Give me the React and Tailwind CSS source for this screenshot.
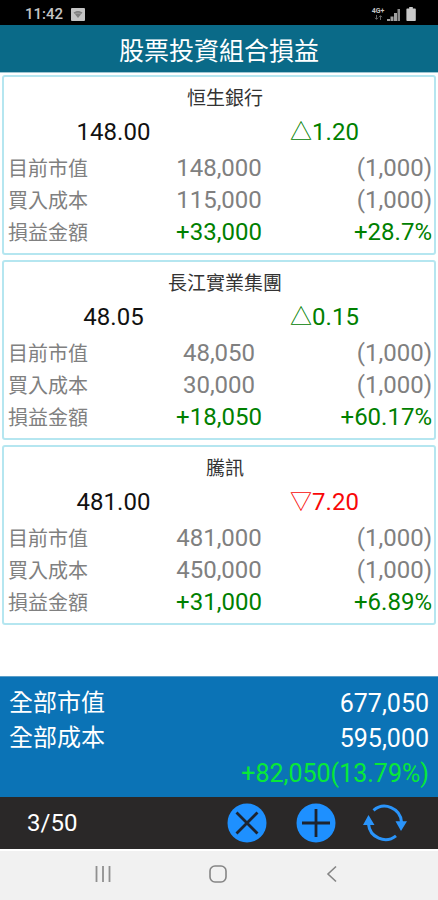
const holdings = [
  {
    name: "恒生銀行",
    price: "148.00",
    up: true,
    change: "1.20",
    value: "148,000",
    cost: "115,000",
    shares: "(1,000)",
    profit: "+33,000",
    rate: "+28.7%",
  },
  {
    name: "長江實業集團",
    price: "48.05",
    up: true,
    change: "0.15",
    value: "48,050",
    cost: "30,000",
    shares: "(1,000)",
    profit: "+18,050",
    rate: "+60.17%",
  },
  {
    name: "騰訊",
    price: "481.00",
    up: false,
    change: "7.20",
    value: "481,000",
    cost: "450,000",
    shares: "(1,000)",
    profit: "+31,000",
    rate: "+6.89%",
  },
];

function StatusBar() {
  return (
    <div className="flex h-[25px] items-center bg-black pt-[3px] pr-[22px] pl-[25px] text-[#c4c4c4]">
      <span className="text-[15px] leading-5 font-medium">11:42</span>
      <svg className="ml-2 h-[13px] w-[14px]" viewBox="0 0 14 13" aria-hidden="true">
        <rect width="14" height="13" rx="1" fill="#c4c4c4" />
        <path d="M2.5 4.6C5 2.4 9 2.4 11.5 4.6L7 10z" fill="#808080" />
        <path d="M4 6.2C5.8 4.8 8.2 4.8 10 6.2" fill="none" stroke="#a8a8a8" strokeWidth="0.8" />
      </svg>
      <div className="ml-auto flex items-center">
        <div className="flex w-[14px] flex-col items-center">
          <span className="text-[7px] leading-[7px] font-bold">4G+</span>
          <svg className="h-[5px] w-[9px]" viewBox="0 0 9 5" aria-hidden="true">
            <path d="M2.5 0v4M1 2.8l1.5 1.6L4 2.8M6.5 5V1M5 2.2L6.5.6 8 2.2" fill="none" stroke="#666" strokeWidth="1" />
          </svg>
        </div>
        <svg className="ml-[2px] h-[13px] w-[14px]" viewBox="0 0 14 13" aria-hidden="true">
          <path d="M0 11h3v2H0zM3.500 8.500h3V13h-3zM7 5h3v8H7z" fill="#a0a0a0" />
          <path d="M10.500 1h2.500v12h-2.500z" fill="#8c8c8c" />
        </svg>
        <svg className="ml-[5px] h-[14px] w-[10px]" viewBox="0 0 10 14" aria-hidden="true">
          <path d="M3.200 0h3.600v1.500H9a.8.8 0 0 1 .8.800v10.900a.8.8 0 0 1-.8.800H1.200a.8.8 0 0 1-.8-.8V2.300A.8.8 0 0 1 1.200 1.500h2z" fill="#c9c9c9" />
        </svg>
      </div>
    </div>
  );
}

function RowLabel({ children }) {
  return (
    <th scope="row" className="p-0 pt-[2px] pl-[2px] text-left align-top text-xl leading-[30px] font-normal">
      {children}
    </th>
  );
}

function HoldingCard({ item }) {
  return (
    <section className="rounded-[3px] border-2 border-[#b5e6f0] bg-white px-[2px] pt-[6px] pb-[5px]">
      <h2 className="pl-3 text-center text-[19px] leading-8 text-[#333]">{item.name}</h2>
      <div className="grid grid-cols-2 px-[2px] text-center text-2xl leading-[34px]">
        <span className="text-[#111]">{item.price}</span>
        <span className={item.up ? "text-[#008000]" : "text-[#f80808]"}>
          <span className="inline-block w-[22px] align-top text-[22px]">{item.up ? "△" : "▽"}</span>
          {item.change}
        </span>
      </div>
      <table className="mt-[3px] w-full table-fixed text-2xl leading-8 text-[#808080]">
        <tbody>
          <tr className="h-8">
            <RowLabel>目前市值</RowLabel>
            <td className="p-0 text-center align-top">{item.value}</td>
            <td className="p-0 text-right align-top">{item.shares}</td>
          </tr>
          <tr className="h-8">
            <RowLabel>買入成本</RowLabel>
            <td className="p-0 text-center align-top">{item.cost}</td>
            <td className="p-0 text-right align-top">{item.shares}</td>
          </tr>
          <tr className="h-8">
            <RowLabel>損益金額</RowLabel>
            <td className="p-0 text-center align-top text-[#008000]">{item.profit}</td>
            <td className="p-0 text-right align-top text-[#008000]">{item.rate}</td>
          </tr>
        </tbody>
      </table>
    </section>
  );
}

function Summary() {
  return (
    <dl className="border-t border-[#5b9fc9] bg-[#0b73b6] px-[9px] pt-[9px] pb-[6px] text-[25px] leading-[35px] text-white">
      <div className="flex justify-between">
        <dt className="text-2xl leading-[35px]">全部市值</dt>
        <dd>677,050</dd>
      </div>
      <div className="flex justify-between">
        <dt className="text-2xl leading-[35px]">全部成本</dt>
        <dd>595,000</dd>
      </div>
      <div className="text-right text-[#08e838]">
        <dd>+82,050(13.79%)</dd>
      </div>
    </dl>
  );
}

function Toolbar() {
  return (
    <div className="flex h-[52px] items-center bg-[#2a2828] pr-[19px] pl-[27px] text-white">
      <span className="mr-auto text-2xl">3/50</span>
      <button type="button" aria-label="刪除" className="flex w-[69px] justify-center">
        <svg className="size-10" viewBox="0 0 40 40" aria-hidden="true">
          <circle cx="20" cy="20" r="19.500" fill="#1e90ff" />
          <path d="M9.500 9.500l21 21M30.500 9.500l-21 21" stroke="#1d2430" strokeWidth="2.800" />
        </svg>
      </button>
      <button type="button" aria-label="新增" className="flex w-[69px] justify-center">
        <svg className="size-10" viewBox="0 0 40 40" aria-hidden="true">
          <circle cx="20" cy="20" r="19.500" fill="#1e90ff" />
          <path d="M20 6v28M6 20h28" stroke="#1d2430" strokeWidth="2.800" />
        </svg>
      </button>
      <button type="button" aria-label="更新" className="flex w-[69px] justify-center">
        <svg className="h-10 w-11" viewBox="0 0 44 40" aria-hidden="true">
          <g fill="none" stroke="#2a94fa" strokeWidth="3">
            <path d="M10.500 7.300A17 17 0 0 1 38.500 19" />
            <path d="M33 32.800A17 17 0 0 1 5.500 21" />
          </g>
          <path d="M32.500 18.300H44L38 28zM0 22h11.500L5.500 12z" fill="#2a94fa" />
        </svg>
      </button>
    </div>
  );
}

function NavigationBar() {
  return (
    <nav className="grid h-[51px] grid-cols-3 items-center justify-items-center border-t-2 border-white bg-[#f1f1f1] pr-[48px] pb-[4px] pl-[46px]">
      <button type="button" aria-label="最近" className="p-2">
        <svg className="size-5" viewBox="0 0 20 20" fill="none" stroke="#909090" strokeWidth="1.800" aria-hidden="true">
          <path d="M3.500 2v16M10 2v16M16.500 2v16" />
        </svg>
      </button>
      <button type="button" aria-label="主頁" className="p-2">
        <svg className="size-5" viewBox="0 0 20 20" fill="none" stroke="#858585" strokeWidth="1.600" aria-hidden="true">
          <rect x="2" y="2" width="16" height="16" rx="5" />
        </svg>
      </button>
      <button type="button" aria-label="返回" className="p-2">
        <svg className="size-5" viewBox="0 0 20 20" fill="none" stroke="#858585" strokeWidth="1.600" aria-hidden="true">
          <path d="M13 2.500L5 10l8 7.500" />
        </svg>
      </button>
    </nav>
  );
}

export default function App() {
  return (
    <div className="flex min-h-screen flex-col bg-white font-[Roboto,'Noto_Sans_CJK_TC',sans-serif]">
      <StatusBar />
      <header className="h-[47px] bg-[#0a6a88] pt-[2px] text-center text-white">
        <h1 className="text-[25px] leading-[50px]">股票投資組合損益</h1>
      </header>
      <main className="flex flex-1 flex-col gap-[5px] border-t border-[#9fc6d2] px-[2px] pt-[2px] pb-[5px]">
        {holdings.map((item) => (
          <HoldingCard key={item.name} item={item} />
        ))}
      </main>
      <Summary />
      <Toolbar />
      <NavigationBar />
    </div>
  );
}
